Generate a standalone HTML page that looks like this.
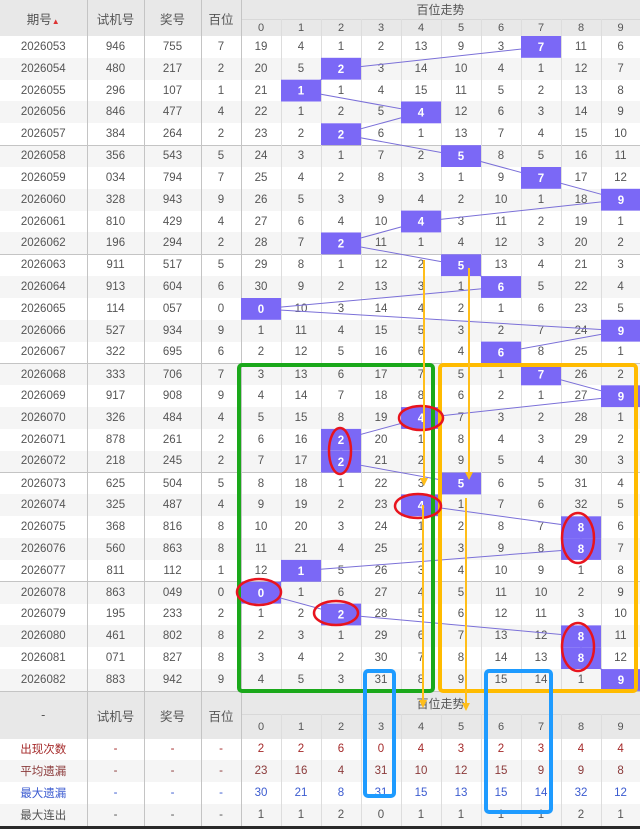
<!DOCTYPE html>
<html><head><meta charset="utf-8"><style>
*{margin:0;padding:0;box-sizing:border-box}
body{width:640px;height:829px;background:#2a2a2a;position:relative;overflow:hidden;font-family:"Liberation Sans","Noto Sans CJK SC",sans-serif;color:#555}
table{position:absolute;left:0;border-collapse:collapse;table-layout:fixed;width:640px;background:#fff}
td,th{text-align:center;font-size:11.5px;font-weight:normal;padding:0;border-right:1px solid #ddd;overflow:hidden;white-space:nowrap}
td.a,th.a{border-right:1px solid #c4c4c4}
th{background:#e8e8e8;color:#555;font-size:12.5px}
th.d{font-size:11px;border-top:1px solid #d8d8d8}
tr.e td{background:#f5f5f5}
tr.g td{border-top:1px solid #c4c4c4}
#top tr.b{height:21.83px}
.r{color:#a52a2a}.br{color:#8b3a3a}.bl{color:#3b5bd0}
</style></head><body>
<table id="top" style="top:0">
<colgroup><col style="width:87px"><col style="width:57px"><col style="width:57px"><col style="width:40px"><col span="9" style="width:40px"><col style="width:39px"></colgroup>
<tr style="height:19px"><th class="a" rowspan="2">期号<span style="font-size:8px;color:#d33">▲</span></th><th class="a" rowspan="2">试机号</th><th class="a" rowspan="2">奖号</th><th class="a" rowspan="2">百位</th><th colspan="10" style="font-size:12px">百位走势</th></tr>
<tr style="height:17px"><th class="d">0</th><th class="d">1</th><th class="d">2</th><th class="d">3</th><th class="d">4</th><th class="d">5</th><th class="d">6</th><th class="d">7</th><th class="d">8</th><th class="d">9</th></tr>
<tr class="b"><td class="a">2026053</td><td class="a">946</td><td class="a">755</td><td class="a">7</td><td>19</td><td>4</td><td>1</td><td>2</td><td>13</td><td>9</td><td>3</td><td></td><td>11</td><td>6</td></tr>
<tr class="b e"><td class="a">2026054</td><td class="a">480</td><td class="a">217</td><td class="a">2</td><td>20</td><td>5</td><td></td><td>3</td><td>14</td><td>10</td><td>4</td><td>1</td><td>12</td><td>7</td></tr>
<tr class="b"><td class="a">2026055</td><td class="a">296</td><td class="a">107</td><td class="a">1</td><td>21</td><td></td><td>1</td><td>4</td><td>15</td><td>11</td><td>5</td><td>2</td><td>13</td><td>8</td></tr>
<tr class="b e"><td class="a">2026056</td><td class="a">846</td><td class="a">477</td><td class="a">4</td><td>22</td><td>1</td><td>2</td><td>5</td><td></td><td>12</td><td>6</td><td>3</td><td>14</td><td>9</td></tr>
<tr class="b"><td class="a">2026057</td><td class="a">384</td><td class="a">264</td><td class="a">2</td><td>23</td><td>2</td><td></td><td>6</td><td>1</td><td>13</td><td>7</td><td>4</td><td>15</td><td>10</td></tr>
<tr class="b e g"><td class="a">2026058</td><td class="a">356</td><td class="a">543</td><td class="a">5</td><td>24</td><td>3</td><td>1</td><td>7</td><td>2</td><td></td><td>8</td><td>5</td><td>16</td><td>11</td></tr>
<tr class="b"><td class="a">2026059</td><td class="a">034</td><td class="a">794</td><td class="a">7</td><td>25</td><td>4</td><td>2</td><td>8</td><td>3</td><td>1</td><td>9</td><td></td><td>17</td><td>12</td></tr>
<tr class="b e"><td class="a">2026060</td><td class="a">328</td><td class="a">943</td><td class="a">9</td><td>26</td><td>5</td><td>3</td><td>9</td><td>4</td><td>2</td><td>10</td><td>1</td><td>18</td><td></td></tr>
<tr class="b"><td class="a">2026061</td><td class="a">810</td><td class="a">429</td><td class="a">4</td><td>27</td><td>6</td><td>4</td><td>10</td><td></td><td>3</td><td>11</td><td>2</td><td>19</td><td>1</td></tr>
<tr class="b e"><td class="a">2026062</td><td class="a">196</td><td class="a">294</td><td class="a">2</td><td>28</td><td>7</td><td></td><td>11</td><td>1</td><td>4</td><td>12</td><td>3</td><td>20</td><td>2</td></tr>
<tr class="b g"><td class="a">2026063</td><td class="a">911</td><td class="a">517</td><td class="a">5</td><td>29</td><td>8</td><td>1</td><td>12</td><td>2</td><td></td><td>13</td><td>4</td><td>21</td><td>3</td></tr>
<tr class="b e"><td class="a">2026064</td><td class="a">913</td><td class="a">604</td><td class="a">6</td><td>30</td><td>9</td><td>2</td><td>13</td><td>3</td><td>1</td><td></td><td>5</td><td>22</td><td>4</td></tr>
<tr class="b"><td class="a">2026065</td><td class="a">114</td><td class="a">057</td><td class="a">0</td><td></td><td>10</td><td>3</td><td>14</td><td>4</td><td>2</td><td>1</td><td>6</td><td>23</td><td>5</td></tr>
<tr class="b e"><td class="a">2026066</td><td class="a">527</td><td class="a">934</td><td class="a">9</td><td>1</td><td>11</td><td>4</td><td>15</td><td>5</td><td>3</td><td>2</td><td>7</td><td>24</td><td></td></tr>
<tr class="b"><td class="a">2026067</td><td class="a">322</td><td class="a">695</td><td class="a">6</td><td>2</td><td>12</td><td>5</td><td>16</td><td>6</td><td>4</td><td></td><td>8</td><td>25</td><td>1</td></tr>
<tr class="b e g"><td class="a">2026068</td><td class="a">333</td><td class="a">706</td><td class="a">7</td><td>3</td><td>13</td><td>6</td><td>17</td><td>7</td><td>5</td><td>1</td><td></td><td>26</td><td>2</td></tr>
<tr class="b"><td class="a">2026069</td><td class="a">917</td><td class="a">908</td><td class="a">9</td><td>4</td><td>14</td><td>7</td><td>18</td><td>8</td><td>6</td><td>2</td><td>1</td><td>27</td><td></td></tr>
<tr class="b e"><td class="a">2026070</td><td class="a">326</td><td class="a">484</td><td class="a">4</td><td>5</td><td>15</td><td>8</td><td>19</td><td></td><td>7</td><td>3</td><td>2</td><td>28</td><td>1</td></tr>
<tr class="b"><td class="a">2026071</td><td class="a">878</td><td class="a">261</td><td class="a">2</td><td>6</td><td>16</td><td></td><td>20</td><td>1</td><td>8</td><td>4</td><td>3</td><td>29</td><td>2</td></tr>
<tr class="b e"><td class="a">2026072</td><td class="a">218</td><td class="a">245</td><td class="a">2</td><td>7</td><td>17</td><td></td><td>21</td><td>2</td><td>9</td><td>5</td><td>4</td><td>30</td><td>3</td></tr>
<tr class="b g"><td class="a">2026073</td><td class="a">625</td><td class="a">504</td><td class="a">5</td><td>8</td><td>18</td><td>1</td><td>22</td><td>3</td><td></td><td>6</td><td>5</td><td>31</td><td>4</td></tr>
<tr class="b e"><td class="a">2026074</td><td class="a">325</td><td class="a">487</td><td class="a">4</td><td>9</td><td>19</td><td>2</td><td>23</td><td></td><td>1</td><td>7</td><td>6</td><td>32</td><td>5</td></tr>
<tr class="b"><td class="a">2026075</td><td class="a">368</td><td class="a">816</td><td class="a">8</td><td>10</td><td>20</td><td>3</td><td>24</td><td>1</td><td>2</td><td>8</td><td>7</td><td></td><td>6</td></tr>
<tr class="b e"><td class="a">2026076</td><td class="a">560</td><td class="a">863</td><td class="a">8</td><td>11</td><td>21</td><td>4</td><td>25</td><td>2</td><td>3</td><td>9</td><td>8</td><td></td><td>7</td></tr>
<tr class="b"><td class="a">2026077</td><td class="a">811</td><td class="a">112</td><td class="a">1</td><td>12</td><td></td><td>5</td><td>26</td><td>3</td><td>4</td><td>10</td><td>9</td><td>1</td><td>8</td></tr>
<tr class="b e g"><td class="a">2026078</td><td class="a">863</td><td class="a">049</td><td class="a">0</td><td></td><td>1</td><td>6</td><td>27</td><td>4</td><td>5</td><td>11</td><td>10</td><td>2</td><td>9</td></tr>
<tr class="b"><td class="a">2026079</td><td class="a">195</td><td class="a">233</td><td class="a">2</td><td>1</td><td>2</td><td></td><td>28</td><td>5</td><td>6</td><td>12</td><td>11</td><td>3</td><td>10</td></tr>
<tr class="b e"><td class="a">2026080</td><td class="a">461</td><td class="a">802</td><td class="a">8</td><td>2</td><td>3</td><td>1</td><td>29</td><td>6</td><td>7</td><td>13</td><td>12</td><td></td><td>11</td></tr>
<tr class="b"><td class="a">2026081</td><td class="a">071</td><td class="a">827</td><td class="a">8</td><td>3</td><td>4</td><td>2</td><td>30</td><td>7</td><td>8</td><td>14</td><td>13</td><td></td><td>12</td></tr>
<tr class="b e"><td class="a">2026082</td><td class="a">883</td><td class="a">942</td><td class="a">9</td><td>4</td><td>5</td><td>3</td><td>31</td><td>8</td><td>9</td><td>15</td><td>14</td><td>1</td><td></td></tr>
</table>

<table style="top:691px;border-top:1px solid #c4c4c4">
<colgroup><col style="width:87px"><col style="width:57px"><col style="width:57px"><col style="width:40px"><col span="9" style="width:40px"><col style="width:39px"></colgroup>
<tr style="height:23px"><th class="a" rowspan="2">-</th><th class="a" rowspan="2">试机号</th><th class="a" rowspan="2">奖号</th><th class="a" rowspan="2">百位</th><th colspan="10" style="font-size:12px">百位走势</th></tr>
<tr style="height:24px"><th class="d">0</th><th class="d">1</th><th class="d">2</th><th class="d">3</th><th class="d">4</th><th class="d">5</th><th class="d">6</th><th class="d">7</th><th class="d">8</th><th class="d">9</th></tr>
<tr style="height:21.75px" class="r"><td class="a">出现次数</td><td class="a">-</td><td class="a">-</td><td class="a">-</td><td>2</td><td>2</td><td>6</td><td>0</td><td>4</td><td>3</td><td>2</td><td>3</td><td>4</td><td>4</td></tr>
<tr style="height:21.75px" class="e br"><td class="a">平均遗漏</td><td class="a">-</td><td class="a">-</td><td class="a">-</td><td>23</td><td>16</td><td>4</td><td>31</td><td>10</td><td>12</td><td>15</td><td>9</td><td>9</td><td>8</td></tr>
<tr style="height:21.75px" class="bl"><td class="a">最大遗漏</td><td class="a">-</td><td class="a">-</td><td class="a">-</td><td>30</td><td>21</td><td>8</td><td>31</td><td>15</td><td>13</td><td>15</td><td>14</td><td>32</td><td>12</td></tr>
<tr style="height:21.75px" class="e"><td class="a">最大连出</td><td class="a">-</td><td class="a">-</td><td class="a">-</td><td>1</td><td>1</td><td>2</td><td>0</td><td>1</td><td>1</td><td>1</td><td>1</td><td>2</td><td>1</td></tr>
</table>

<svg width="640" height="829" style="position:absolute;left:0;top:0" font-family="Liberation Sans, sans-serif" font-size="11.5" font-weight="bold">
<polyline fill="none" stroke="#7b70d8" stroke-width="1" points="541,46.9 341,68.7 301,90.6 421,112.4 341,134.2 461,156.1 541,177.9 621,199.7 421,221.5 341,243.4 461,265.2 501,287 261,308.9 621,330.7 501,352.5 541,374.4 621,396.2 421,418 341,439.8 341,461.7 461,483.5 421,505.3 581,527.2 581,549 301,570.8 261,592.7 341,614.5 581,636.3 581,658.1 621,680"/>
<g fill="#7b68f6">
<rect x="521" y="36" width="40" height="21.8"/><rect x="321" y="57.8" width="40" height="21.8"/><rect x="281" y="79.7" width="40" height="21.8"/><rect x="401" y="101.5" width="40" height="21.8"/><rect x="321" y="123.3" width="40" height="21.8"/><rect x="441" y="145.2" width="40" height="21.8"/><rect x="521" y="167" width="40" height="21.8"/><rect x="601" y="188.8" width="39" height="21.8"/><rect x="401" y="210.6" width="40" height="21.8"/><rect x="321" y="232.5" width="40" height="21.8"/><rect x="441" y="254.3" width="40" height="21.8"/><rect x="481" y="276.1" width="40" height="21.8"/><rect x="241" y="298" width="40" height="21.8"/><rect x="601" y="319.8" width="39" height="21.8"/><rect x="481" y="341.6" width="40" height="21.8"/><rect x="521" y="363.5" width="40" height="21.8"/><rect x="601" y="385.3" width="39" height="21.8"/><rect x="401" y="407.1" width="40" height="21.8"/><rect x="321" y="428.9" width="40" height="21.8"/><rect x="321" y="450.8" width="40" height="21.8"/><rect x="441" y="472.6" width="40" height="21.8"/><rect x="401" y="494.4" width="40" height="21.8"/><rect x="561" y="516.3" width="40" height="21.8"/><rect x="561" y="538.1" width="40" height="21.8"/><rect x="281" y="559.9" width="40" height="21.8"/><rect x="241" y="581.8" width="40" height="21.8"/><rect x="321" y="603.6" width="40" height="21.8"/><rect x="561" y="625.4" width="40" height="21.8"/><rect x="561" y="647.2" width="40" height="21.8"/><rect x="601" y="669.1" width="39" height="21.8"/>
</g>
<g fill="#fff" text-anchor="middle">
<text x="541" y="51">7</text><text x="341" y="72.8">2</text><text x="301" y="94.7">1</text><text x="421" y="116.5">4</text><text x="341" y="138.3">2</text><text x="461" y="160.2">5</text><text x="541" y="182">7</text><text x="621" y="203.8">9</text><text x="421" y="225.6">4</text><text x="341" y="247.5">2</text><text x="461" y="269.3">5</text><text x="501" y="291.1">6</text><text x="261" y="313">0</text><text x="621" y="334.8">9</text><text x="501" y="356.6">6</text><text x="541" y="378.5">7</text><text x="621" y="400.3">9</text><text x="421" y="422.1">4</text><text x="341" y="443.9">2</text><text x="341" y="465.8">2</text><text x="461" y="487.6">5</text><text x="421" y="509.4">4</text><text x="581" y="531.3">8</text><text x="581" y="553.1">8</text><text x="301" y="574.9">1</text><text x="261" y="596.8">0</text><text x="341" y="618.6">2</text><text x="581" y="640.4">8</text><text x="581" y="662.2">8</text><text x="621" y="684.1">9</text>
</g>
<g fill="none">
<rect x="239" y="365" width="194" height="326" rx="3" stroke="#1aa81a" stroke-width="4"/>
<rect x="440" y="365" width="196" height="326" rx="3" stroke="#ffbb00" stroke-width="4"/>
<rect x="365" y="671" width="29" height="125" rx="3" stroke="#1e9bff" stroke-width="4"/>
<rect x="486" y="671" width="65" height="141" rx="3" stroke="#1e9bff" stroke-width="4"/>
<g stroke="#e8141e" stroke-width="2.5">
<ellipse cx="421" cy="418" rx="22" ry="12"/><ellipse cx="340" cy="451" rx="11" ry="23"/><ellipse cx="418" cy="506" rx="23" ry="12"/><ellipse cx="578" cy="538" rx="16" ry="25"/><ellipse cx="259" cy="592" rx="22" ry="13"/><ellipse cx="336" cy="613" rx="22" ry="12"/><ellipse cx="578" cy="647" rx="16" ry="24"/>
</g>
<g stroke="#ffbe1a" stroke-width="2">
<line x1="424" y1="260" x2="424" y2="480"/><line x1="469" y1="268" x2="469" y2="474"/><line x1="423" y1="505" x2="423" y2="702"/><line x1="466" y1="498" x2="466" y2="705"/>
</g>
</g>
<g fill="#ffbe1a">
<polygon points="420,478 428,478 424,486"/><polygon points="465,472 473,472 469,480"/><polygon points="419,700 427,700 423,708"/><polygon points="462,703 470,703 466,711"/>
</g>
</svg>
</body></html>
